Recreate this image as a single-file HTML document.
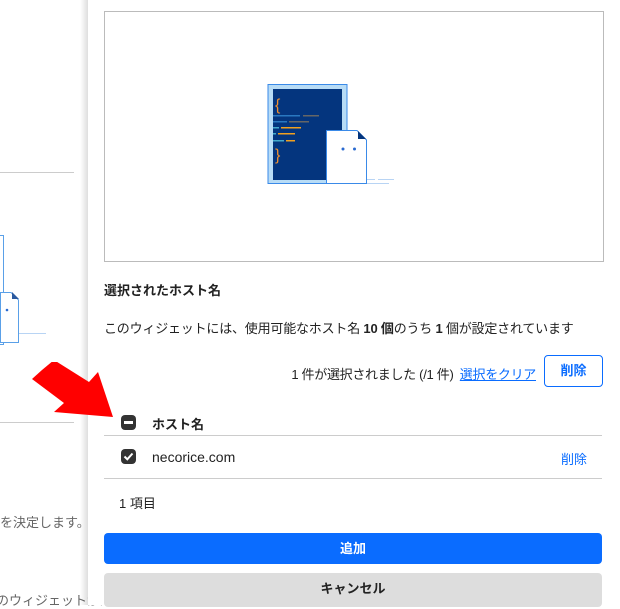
<!DOCTYPE html>
<html><head><meta charset="utf-8"><style>
body{margin:0;width:620px;height:605px;overflow:hidden;position:relative;background:#fff;font-family:"Liberation Sans","Noto Sans CJK JP",sans-serif;color:#222}
.a{position:absolute}
</style></head><body>
<div class="a" style="left:0;top:172px;width:74px;height:1px;background:#ccc"></div>
<div class="a" style="left:0;top:422px;width:74px;height:1px;background:#ccc"></div>
<div class="a" style="left:-10px;top:235px;width:12px;height:108px;border:1px solid #5aa0e8;background:#fff"></div>
<svg class="a" style="left:0;top:285px" width="50" height="60"><path d="M0.5 7.5 L11 7.5 L18.5 15 L18.5 57.5 L0.5 57.5Z" fill="#fff" stroke="#5aa0e8"/><path d="M12 7 L19 14 L12 14Z" fill="#2a5aa0"/><circle cx="7" cy="25" r="1.3" fill="#2a6ad0"/><rect x="19" y="48" width="27" height="1" fill="#b8d4f4"/></svg>
<div class="a" style="left:0;top:512px;font-size:13px;color:#666;white-space:nowrap">を決定します。イ</div>
<div class="a" style="left:-4px;top:590px;font-size:13px;color:#666;white-space:nowrap">のウィジェットが未</div>
<div class="a" style="left:80px;top:0;width:8px;height:605px;background:linear-gradient(to right,rgba(0,0,0,0),rgba(0,0,0,0.13))"></div>
<div class="a" style="left:88px;top:0;width:532px;height:605px;background:#fff"></div>
<div class="a" style="left:104px;top:11px;width:498px;height:249px;border:1px solid #bbb"></div>
<svg class="a" style="left:260px;top:80px" width="150" height="110">
<rect x="8" y="4.5" width="79" height="99" fill="#b8dcf6" stroke="#3a8ae8"/>
<rect x="13" y="9" width="69" height="91" fill="#04357e"/>
<text x="15" y="30" fill="#f09030" font-size="16" font-family="Liberation Sans">{</text>
<text x="15" y="80" fill="#f09030" font-size="16" font-family="Liberation Sans">}</text>
<rect x="13" y="35" width="27" height="1.5" fill="#2a78c0"/><rect x="43" y="35" width="16" height="1.5" fill="#666"/>
<rect x="13" y="41" width="14" height="1.5" fill="#2a78c0"/><rect x="29" y="41" width="20" height="1.5" fill="#666"/>
<rect x="13" y="47" width="6" height="1.5" fill="#4ac"/><rect x="21" y="47" width="20" height="1.5" fill="#f0a020"/>
<rect x="13" y="53" width="3" height="1.5" fill="#4ac"/><rect x="18" y="53" width="17" height="1.5" fill="#f0a020"/>
<rect x="13" y="60" width="11" height="1.5" fill="#4ac"/><rect x="26" y="60" width="9" height="1.5" fill="#f0a020"/>
<path d="M66.5 103.5 L66.5 50.5 L97 50.5 L106.5 60 L106.5 103.5Z" fill="#fff" stroke="#3a8ae8"/>
<path d="M98 51 L106 59 L98 59Z" fill="#04357e"/>
<circle cx="83" cy="69" r="1.5" fill="#2a6ad0"/><circle cx="94.5" cy="69" r="1.5" fill="#2a6ad0"/>
<rect x="107" y="99" width="8" height="1" fill="#b8d4f4"/><rect x="118" y="99" width="16" height="1" fill="#b8d4f4"/>
<rect x="107" y="103" width="22" height="1" fill="#b8d4f4"/>
</svg>
<div class="a" style="left:104px;top:280px;font-size:13px;font-weight:bold">選択されたホスト名</div>
<div class="a" style="left:104px;top:318px;font-size:13px;white-space:nowrap;letter-spacing:-0.2px">このウィジェットには、使用可能なホスト名 <b>10 個</b>のうち <b>1</b> 個が設定されています</div>
<div class="a" style="right:84px;top:364px;font-size:13px;white-space:nowrap;letter-spacing:-0.3px">1 件が選択されました (/1 件) <span style="color:#0a6cff;text-decoration:underline;margin-left:3px">選択をクリア</span></div>
<div class="a" style="left:544px;top:355px;width:59px;height:32px;border:1px solid #0a6cff;border-radius:4px;box-sizing:border-box;color:#0a6cff;font-size:13px;font-weight:bold;text-align:center;line-height:30px">削除</div>
<svg class="a" style="left:30px;top:362px" width="85" height="55"><path d="M10 5 L0 14 L32 38 L22 47 L81 52 L66 7 L57 17 L22 -5Z" transform="translate(2,3)" fill="#f00"/></svg>
<div class="a" style="left:121px;top:415px;width:15px;height:15px;border-radius:4px;background:#333"><div style="position:absolute;left:3px;top:6px;width:9px;height:2.5px;background:#fff"></div></div>
<div class="a" style="left:152px;top:414px;font-size:13px;font-weight:bold">ホスト名</div>
<div class="a" style="left:104px;top:435px;width:498px;height:1px;background:#ccc"></div>
<div class="a" style="left:121px;top:449px;width:15px;height:15px;border-radius:4px;background:#333"><svg width="15" height="15" style="position:absolute"><path d="M3.5 7.5 L6.3 10.3 L11.5 4.5" stroke="#fff" stroke-width="2" fill="none"/></svg></div>
<div class="a" style="left:152px;top:449px;font-size:14px">necorice.com</div>
<div class="a" style="left:561px;top:449px;font-size:13px;color:#0a6cff">削除</div>
<div class="a" style="left:104px;top:478px;width:498px;height:1px;background:#ccc"></div>
<div class="a" style="left:119px;top:493px;font-size:13px">1 項目</div>
<div class="a" style="left:104px;top:533px;width:498px;height:31px;background:#0a6cff;border-radius:4px;color:#fff;font-size:13px;font-weight:bold;text-align:center;line-height:31px">追加</div>
<div class="a" style="left:104px;top:573px;width:498px;height:34px;background:#ddd;border-radius:4px;color:#222;font-size:13px;font-weight:bold;text-align:center;line-height:31px">キャンセル</div>
</body></html>
